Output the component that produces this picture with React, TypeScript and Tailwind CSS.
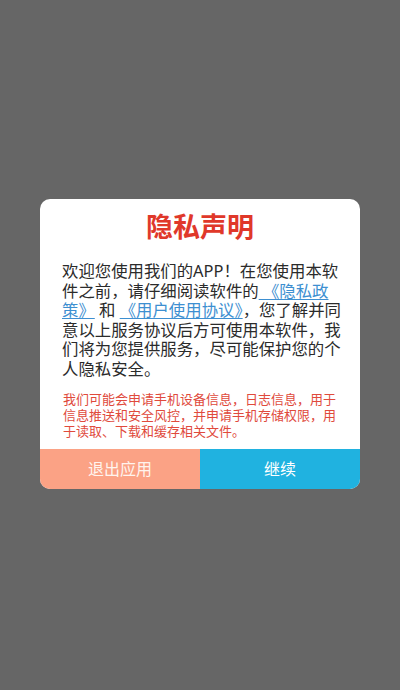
const link = "text-[#3d8fd1] underline decoration-[1px] underline-offset-[2px]"

export default function App() {
  return (
    <div
      className="flex h-[690px] w-[400px] items-start justify-center bg-[#666666] pt-[199px]"
      style={{ fontFamily: '"Noto Sans", "Noto Sans CJK SC", sans-serif' }}
    >
      <div className="w-[320px] overflow-hidden rounded-[10px] bg-white">
        <h1 className="pt-[9px] text-center text-[27px] font-bold leading-[38px] text-[#e0382a]">
          隐私声明
        </h1>
        <p className="mt-[15px] whitespace-nowrap px-[22px] text-[16.4px] leading-[19.6px] text-[#2b2b2b]">
          欢迎您使用我们的APP！在您使用本软
          <br />
          件之前，请仔细阅读软件的<span className={link}> 《隐私政</span>
          <br />
          <span className={link}>策》</span> 和 <span className={link}>《用户使用协议》</span>，您了解并同
          <br />
          意以上服务协议后方可使用本软件，我
          <br />
          们将为您提供服务，尽可能保护您的个
          <br />
          人隐私安全。
        </p>
        <p className="mt-[12px] px-[23px] text-[13px] leading-[16px] text-[#e04a3c]">
          我们可能会申请手机设备信息，日志信息，用于信息推送和安全风控，并申请手机存储权限，用于读取、下载和缓存相关文件。
        </p>
        <div className="mt-[10px] flex h-[40px]">
          <button className="flex-1 bg-[#fba285] text-[16px] text-[#fff4ee]">退出应用</button>
          <button className="flex-1 bg-[#20b2e0] text-[16px] text-white">继续</button>
        </div>
      </div>
    </div>
  )
}
